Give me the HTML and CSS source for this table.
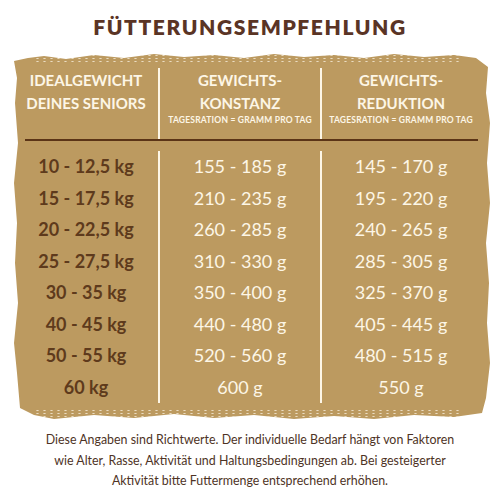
FILE: index.html
```html
<!DOCTYPE html>
<html lang="de">
<head>
  <meta charset="UTF-8" />
  <title>Fütterungsempfehlung</title>
  <link rel="stylesheet" href="styles.css">
</head>
<body>
  <h1 class="title">FÜTTERUNGSEMPFEHLUNG</h1>

  <div class="board">
    <div class="grid">
      <div class="head c1">IDEALGEWICHT<br>DEINES SENIORS</div>
      <div class="head c2">GEWICHTS-<br>KONSTANZ<span class="sub">TAGESRATION = GRAMM PRO TAG</span></div>
      <div class="head c3">GEWICHTS-<br>REDUKTION<span class="sub">TAGESRATION = GRAMM PRO TAG</span></div>

      <div class="rule"></div>

      <div class="kg c1 first">10 - 12,5 kg</div><div class="val c2 first">155 - 185 g</div><div class="val c3 first">145 - 170 g</div>
      <div class="kg c1">15 - 17,5 kg</div><div class="val c2">210 - 235 g</div><div class="val c3">195 - 220 g</div>
      <div class="kg c1">20 - 22,5 kg</div><div class="val c2">260 - 285 g</div><div class="val c3">240 - 265 g</div>
      <div class="kg c1">25 - 27,5 kg</div><div class="val c2">310 - 330 g</div><div class="val c3">285 - 305 g</div>
      <div class="kg c1">30 - 35 kg</div><div class="val c2">350 - 400 g</div><div class="val c3">325 - 370 g</div>
      <div class="kg c1">40 - 45 kg</div><div class="val c2">440 - 480 g</div><div class="val c3">405 - 445 g</div>
      <div class="kg c1">50 - 55 kg</div><div class="val c2">520 - 560 g</div><div class="val c3">480 - 515 g</div>
      <div class="kg c1">60 kg</div><div class="val c2">600 g</div><div class="val c3">550 g</div>
    </div>
  </div>

  <p class="note">
    Diese Angaben sind Richtwerte. Der individuelle Bedarf hängt von Faktoren<br>
    wie Alter, Rasse, Aktivität und Haltungsbedingungen ab. Bei gesteigerter<br>
    Aktivität bitte Futtermenge entsprechend erhöhen.
  </p>
</body>
</html>
```

FILE: styles.css
```css
body { margin: 0; background: #fff; font-family: Lato, "Open Sans", sans-serif; width: 500px; }

.title { margin: 0; padding-top: 15px; height: 38px; text-align: center; font-size: 21px; font-weight: 800; letter-spacing: 1.6px; color: #5a3425; line-height: 24px; }

/* tan board with torn edges */
.board {
  position: relative;
  margin: 0 10px 0 14px;
  height: 367px;
  background: #bc9a60;
  padding: 15px 0 0 0;
  box-sizing: border-box;
  clip-path: polygon(0px 8px, 14px 5px, 30px 3px, 52px 6px, 80px 2px, 110px 5px, 140px 1px, 170px 4px, 200px 2px, 230px 5px, 260px 1px, 290px 4px, 320px 2px, 350px 5px, 380px 1px, 410px 4px, 440px 2px, 462px 5px, 474px 14px, 472px 40px, 476px 70px, 473px 110px, 476px 150px, 472px 190px, 475px 230px, 473px 270px, 476px 310px, 472px 345px, 468px 360px, 440px 364px, 400px 362px, 360px 366px, 320px 363px, 280px 366px, 240px 362px, 200px 365px, 160px 361px, 120px 365px, 80px 362px, 40px 366px, 20px 362px, 6px 355px, 3px 320px, 0px 290px, 4px 250px, 1px 210px, 3px 170px, 0px 130px, 4px 90px, 1px 50px, 3px 25px);
}
.board::before, .board::after {
  content: "";
  position: absolute;
  left: 20px;
  right: 30px;
  height: 8px;
  background-image: radial-gradient(rgba(255,248,235,0.7) 0.8px, transparent 1.3px);
  background-size: 7px 3px;
}
.board::before { top: 1px; }
.board::after { bottom: 3px; }

.grid { display: grid; grid-template-columns: 144px 162px 1fr; }
.c2, .c3 { border-left: 2px solid #fdf6e6; }
.c3 { margin-right: 10px; }

.head { color: #fdf6e6; font-size: 15px; font-weight: 700; line-height: 23px; text-align: center; height: 71px; box-sizing: border-box; padding-top: 1px; }
.sub { display: block; font-size: 8.5px; line-height: 11px; letter-spacing: 0.2px; }

.rule { grid-column: 1 / -1; height: 2px; background: #5b3416; margin: 0 12px 0 11px; }

.kg, .val { height: 31.5px; line-height: 31.5px; text-align: center; font-size: 18px; }
.kg { color: #5e3a1c; font-weight: 700; }
.val { color: #fdf6e6; font-weight: 400; }
.first { margin-top: 10px; }

.note { margin: 10px 0 0; text-align: center; font-size: 12.4px; line-height: 20.5px; color: #4e3325; }
```
